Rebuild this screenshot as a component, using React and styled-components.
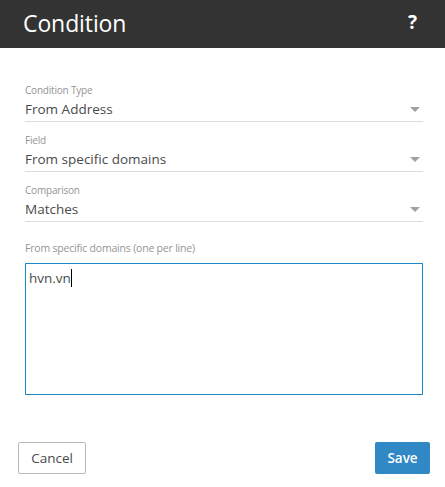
import React from 'react'
import styled, { createGlobalStyle } from 'styled-components'

const Global = createGlobalStyle`
  html, body {
    margin: 0;
    padding: 0;
    background: #fff;
    font-family: "Open Sans", "Noto Sans", sans-serif;
  }
`

const fields = [
  { label: 'Condition Type', value: 'From Address' },
  { label: 'Field', value: 'From specific domains' },
  { label: 'Comparison', value: 'Matches' },
]

const App = () => {
  return (
    <Dialog>
      <Global />
      <Header>
        <Title>Condition</Title>
        <Help>?</Help>
      </Header>
      <Body>
        {fields.map((f) => (
          <Field key={f.label}>
            <Label>{f.label}</Label>
            <Select>
              <span>{f.value}</span>
              <Caret />
            </Select>
          </Field>
        ))}
        <AreaLabel>From specific domains (one per line)</AreaLabel>
        <TextArea>
          hvn.vn<Cursor />
        </TextArea>
      </Body>
      <Footer>
        <CancelButton>Cancel</CancelButton>
        <SaveButton>Save</SaveButton>
      </Footer>
    </Dialog>
  )
}

export default App

const Dialog = styled.div`
  width: 445px;
  height: 487px;
  display: flex;
  flex-direction: column;
  background: #fff;
`

const Header = styled.div`
  height: 48px;
  background: #333333;
  display: flex;
  align-items: center;
  justify-content: space-between;
  padding: 0 28px 0 23px;
  box-sizing: border-box;
`

const Title = styled.div`
  color: #fff;
  font-size: 23px;
  letter-spacing: -0.1px;
  line-height: 1;
  margin-top: -2px;
`

const Help = styled.div`
  color: #fff;
  font-size: 19px;
  font-weight: 700;
  line-height: 1;
  margin-top: -4px;
`

const Body = styled.div`
  padding: 35px 22px 0 25px;
  display: flex;
  flex-direction: column;
`

const Field = styled.div`
  display: flex;
  flex-direction: column;
  margin-bottom: 11px;
`

const Label = styled.div`
  font-size: 10px;
  line-height: 14px;
  color: #959595;
  letter-spacing: -0.2px;
`

const Select = styled.div`
  display: flex;
  align-items: center;
  justify-content: space-between;
  height: 24px;
  font-size: 13.5px;
  color: #4a4a4a;
  border-bottom: 1px solid #dcdcdc;
  padding-right: 3px;
`

const Caret = styled.span`
  width: 0;
  height: 0;
  border-left: 5px solid transparent;
  border-right: 5px solid transparent;
  border-top: 5px solid #a0a0a0;
  margin-top: 1px;
`

const AreaLabel = styled.div`
  font-size: 10.5px;
  line-height: 14px;
  color: #959595;
  margin-top: 8px;
  letter-spacing: -0.2px;
`

const TextArea = styled.div`
  margin-top: 8px;
  height: 132px;
  box-sizing: border-box;
  border: 1px solid #1f88c6;
  padding: 5px 3px;
  font-size: 13.5px;
  line-height: 18px;
  color: #4a4a4a;
  display: flex;
  align-items: flex-start;
`

const Cursor = styled.span`
  display: inline-block;
  width: 1px;
  height: 18px;
  background: #000;
`

const Footer = styled.div`
  display: flex;
  justify-content: space-between;
  padding: 47px 15px 0 18px;
`

const Button = styled.button`
  height: 32px;
  font-family: "Open Sans", "Noto Sans", sans-serif;
  font-size: 13.5px;
  border-radius: 2px;
  cursor: pointer;
  box-sizing: border-box;
`

const CancelButton = styled(Button)`
  width: 68px;
  background: #fff;
  color: #4a4a4a;
  border: 1px solid #b8b8b8;
`

const SaveButton = styled(Button)`
  width: 55px;
  background: #3088c5;
  color: #fff;
  border: none;
  font-weight: 600;
`
